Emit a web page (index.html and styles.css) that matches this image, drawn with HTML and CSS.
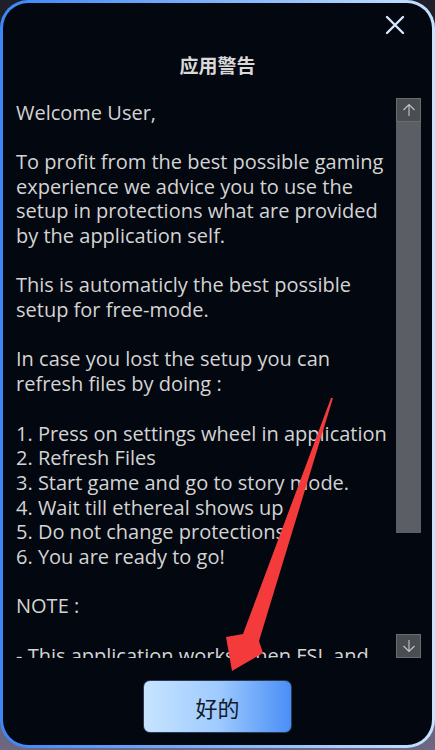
FILE: index.html
```html
<!DOCTYPE html>
<html lang="zh">
<head>
<meta charset="utf-8">
<link rel="stylesheet" href="styles.css">
</head>
<body>
<div class="frame">
  <div class="dialog">
    <div class="topbar">
      <button class="close" aria-label="关闭">
        <svg width="20" height="20" viewBox="0 0 20 20"><path d="M2 2 L18 18 M18 2 L2 18" stroke="#d6e9ff" stroke-width="2.4" stroke-linecap="round"/></svg>
      </button>
    </div>
    <h1 class="title">应用警告</h1>
    <div class="body">
      <div class="text">
        <p>Welcome User,</p>
        <p>To profit from the best possible gaming<br>experience we advice you to use the<br>setup in protections what are provided<br>by the application self.</p>
        <p>This is automaticly the best possible<br>setup for free-mode.</p>
        <p>In case you lost the setup you can<br>refresh files by doing :</p>
        <p>1. Press on settings wheel in application<br>2. Refresh Files<br>3. Start game and go to story mode.<br>4. Wait till ethereal shows up<br>5. Do not change protections.<br>6. You are ready to go!</p>
        <p>NOTE :</p>
        <p>- This application works when FSL and<br>other mods are installed.</p>
      </div>
      <div class="scrollbar">
        <div class="sb-btn">
          <svg width="14" height="14" viewBox="0 0 14 14"><path d="M7 13 V1.5 M1.5 7 L7 1.5 L12.5 7" stroke="#c4c6c9" stroke-width="1.1" fill="none"/></svg>
        </div>
        <div class="sb-thumb"></div>
        <div class="sb-track"></div>
        <div class="sb-btn">
          <svg width="14" height="14" viewBox="0 0 14 14"><path d="M7 1 V12.5 M1.5 7 L7 12.5 L12.5 7" stroke="#c4c6c9" stroke-width="1.1" fill="none"/></svg>
        </div>
      </div>
    </div>
    <div class="footer">
      <button class="ok">好的</button>
    </div>
  </div>
  <svg class="arrow" width="435" height="750" viewBox="0 0 435 750">
    <polygon points="333,398 259,641 263,653 232,671 226,637 243,634 331,398" fill="#f43a3a"/>
  </svg>
</div>
</body>
</html>
```

FILE: styles.css
```css
* { box-sizing: border-box; }
html, body { margin: 0; padding: 0; }
body {
  width: 435px;
  height: 750px;
  overflow: hidden;
  background: linear-gradient(to bottom, #1f1f29 0%, #3a3846 50%, #6d6781 100%);
  font-family: "Open Sans", "Noto Sans", sans-serif;
}
.frame {
  position: relative;
  width: 435px;
  height: 750px;
}
.dialog {
  width: 435px;
  height: 748px;
  border: 3px solid transparent;
  border-radius: 28px;
  background:
    linear-gradient(#03070f, #03070f) padding-box,
    linear-gradient(to right, #3d86f7, #7fb3fb 50%, #c6e3ff) border-box;
  display: flex;
  flex-direction: column;
  overflow: hidden;
}
.topbar {
  height: 44px;
  display: flex;
  justify-content: flex-end;
  align-items: flex-start;
  padding: 12px 27px 0 0;
}
.close {
  width: 20px;
  height: 20px;
  padding: 0;
  border: 0;
  background: none;
  display: flex;
}
.title {
  margin: 6px 0 0;
  height: 24px;
  line-height: 24px;
  text-align: center;
  font-family: "Noto Sans CJK SC", sans-serif;
  font-size: 19px;
  font-weight: 700;
  color: #d9d9d9;
}
.body {
  margin-top: 21px;
  height: 560px;
  display: flex;
  align-items: flex-start;
}
.text {
  flex: 1;
  height: 560px;
  overflow: hidden;
  padding: 2.5px 0 0 13px;
  color: #d4d4d4;
  font-size: 20px;
  line-height: 24.7px;
  white-space: nowrap;
}
.text p {
  margin: 0 0 24.7px;
}
.scrollbar {
  width: 25px;
  height: 560px;
  margin-right: 11px;
  display: flex;
  flex-direction: column;
}
.sb-btn {
  height: 24px;
  background: #4a4d52;
  border: 1px solid #6a6c70;
  display: flex;
  align-items: center;
  justify-content: center;
}
.sb-thumb {
  height: 411px;
  background: #5b5f65;
}
.sb-track {
  flex: 1;
}
.footer {
  margin-top: 22px;
  display: flex;
  justify-content: center;
}
.ok {
  width: 149px;
  height: 53px;
  border: 1px solid #2a3a55;
  border-radius: 7px;
  background: linear-gradient(to right, #c7e4ff, #9fcbff 50%, #4a8ef6);
  color: #151a26;
  font-family: "Noto Sans CJK SC", sans-serif;
  font-size: 22px;
  padding: 0;
}
.arrow {
  position: absolute;
  left: 0;
  top: 0;
  pointer-events: none;
}
```
